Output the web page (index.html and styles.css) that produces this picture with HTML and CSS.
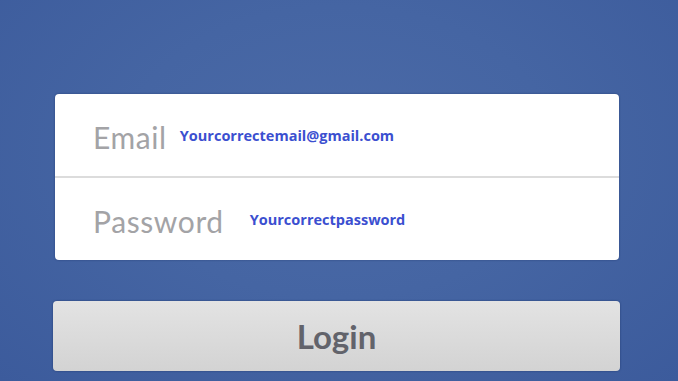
FILE: index.html
```html
<!DOCTYPE html>
<html lang="en">
<head>
  <meta charset="UTF-8">
  <meta name="viewport" content="width=device-width, initial-scale=1.0">
  <title>Login</title>
  <link rel="stylesheet" href="styles.css">
</head>
<body>
  <div class="screen">
    <div class="login-card">
      <div class="field">
        <span class="label">Email</span>
        <span class="value">Yourcorrectemail@gmail.com</span>
      </div>
      <div class="field field-password">
        <span class="label">Password</span>
        <span class="value">Yourcorrectpassword</span>
      </div>
    </div>

    <div class="button">Login</div>
  </div>
</body>
</html>
```

FILE: styles.css
```css
body {
  margin: 0;
  padding: 0;
  font-family: Lato, "Open Sans", sans-serif;
}

.screen {
  width: 678px;
  height: 381px;
  overflow: hidden;
  box-sizing: border-box;
  padding-top: 94px;
  background: radial-gradient(ellipse at 50% 40%, #4b6aa7 0%, #4565a3 45%, #3c5b9c 100%);
}

.login-card {
  margin-left: 55px;
  width: 564px;
  background-color: #fff;
  border-radius: 4px;
  box-shadow: 0 0 2px rgba(20, 40, 90, 0.6);
}

.field {
  display: flex;
  align-items: center;
  height: 82px;
  padding-left: 38px;
}

.field + .field {
  border-top: 2px solid #dcdcdc;
}

.label {
  font-size: 30px;
  letter-spacing: 0.6px;
  color: #a3a3a6;
  margin-right: 13px;
  padding-top: 3px;
}

.field-password .label {
  margin-right: 26px;
}

.value {
  font-family: "Open Sans", sans-serif;
  font-weight: bold;
  font-size: 14.5px;
  color: #3b4fd0;
}

.button {
  margin: 41px 0 0 53px;
  width: 567px;
  height: 70px;
  box-sizing: border-box;
  border-radius: 4px;
  background: linear-gradient(#e3e3e3, #d3d3d3);
  box-shadow: 0 0 2px rgba(20, 40, 90, 0.7);
  text-align: center;
  line-height: 70px;
  font-size: 33px;
  font-weight: bold;
  color: #62636b;
}
```
